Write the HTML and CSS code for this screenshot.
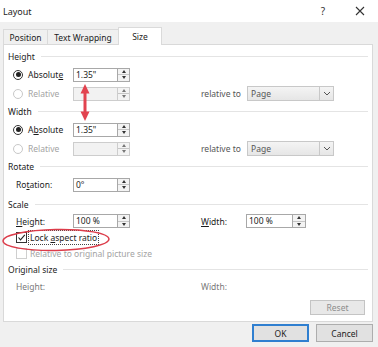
FILE: index.html
```html
<!DOCTYPE html>
<html lang="en">
<head>
    <meta charset="UTF-8">
    <title>Layout</title>
    <link rel="stylesheet" href="styles.css">
</head>
<body>
<div class="dialog">
    <!-- Title bar -->
    <div class="titlebar">
        <span class="title">Layout</span>
        <span class="help">?</span>
        <svg class="close" width="10" height="10" viewBox="0 0 10 10"><path d="M1 1 L9 9 M9 1 L1 9" stroke="#333" stroke-width="1.1"/></svg>
    </div>

    <!-- Tabs -->
    <div class="tabs">
        <div class="tab tab-pos">Position</div>
        <div class="tab tab-wrap">Text Wrapping</div>
        <div class="tab tab-size active">Size</div>
    </div>

    <div class="panel">
        <!-- Height -->
        <div class="heading">Height</div>
        <div class="row">
            <div class="opt"><span class="radio checked"></span>Absolut<u>e</u></div>
            <div class="spin"><div class="field">1.35"</div><div class="arrows"><span class="up"></span><span class="down"></span></div></div>
        </div>
        <div class="row disabled">
            <div class="opt"><span class="radio"></span>Relative</div>
            <div class="spin"><div class="field"></div><div class="arrows"><span class="up"></span><span class="down"></span></div></div>
            <div class="relto">relative to</div>
            <div class="select"><span class="sel-text">Page</span><span class="drop"><svg width="8" height="5" viewBox="0 0 8 5"><path d="M1 1 L4 4 L7 1" fill="none" stroke="#555" stroke-width="1"/></svg></span></div>
        </div>

        <!-- Width -->
        <div class="heading">Width</div>
        <div class="row">
            <div class="opt"><span class="radio checked"></span>A<u>b</u>solute</div>
            <div class="spin"><div class="field">1.35"</div><div class="arrows"><span class="up"></span><span class="down"></span></div></div>
        </div>
        <div class="row disabled">
            <div class="opt"><span class="radio"></span>Relative</div>
            <div class="spin"><div class="field"></div><div class="arrows"><span class="up"></span><span class="down"></span></div></div>
            <div class="relto">relative to</div>
            <div class="select"><span class="sel-text">Page</span><span class="drop"><svg width="8" height="5" viewBox="0 0 8 5"><path d="M1 1 L4 4 L7 1" fill="none" stroke="#555" stroke-width="1"/></svg></span></div>
        </div>

        <!-- Rotate -->
        <div class="heading">Rotate</div>
        <div class="row">
            <div class="name">Ro<u>t</u>ation:</div>
            <div class="spin"><div class="field">0°</div><div class="arrows"><span class="up"></span><span class="down"></span></div></div>
        </div>

        <!-- Scale -->
        <div class="heading scale">Scale</div>
        <div class="row small">
            <div class="name"><u>H</u>eight:</div>
            <div class="spin"><div class="field">100 %</div><div class="arrows"><span class="up"></span><span class="down"></span></div></div>
            <div class="wlabel"><u>W</u>idth:</div>
            <div class="spin wide"><div class="field">100 %</div><div class="arrows"><span class="up"></span><span class="down"></span></div></div>
        </div>
        <div class="row small">
            <span class="check checked"><svg width="9" height="9" viewBox="0 0 9 9"><path d="M1.5 4.5 L3.5 6.8 L7.8 1.8" fill="none" stroke="#222" stroke-width="1.1"/></svg></span>
            <span class="focus">Lock <u>a</u>spect ratio</span>
        </div>
        <div class="row small disabled">
            <span class="check"></span>
            <span class="plain">Relative to original picture size</span>
        </div>

        <!-- Original size -->
        <div class="heading">Original size</div>
        <div class="row small muted">
            <div class="name">Height:</div>
            <div class="wlabel orig">Width:</div>
        </div>
        <div class="reset-row">
            <button class="btn reset">Reset</button>
        </div>
    </div>

    <div class="footer">
        <button class="btn ok">OK</button>
        <button class="btn">Cancel</button>
    </div>

    <!-- red annotations drawn over the dialog -->
    <svg class="marks" width="378" height="347" viewBox="0 0 378 347">
        <path d="M85 84 L80.5 93.5 L89.5 93.5 Z" fill="#e2434f"/>
        <path d="M85 121 L80.5 111.5 L89.5 111.5 Z" fill="#e2434f"/>
        <line x1="85" y1="92" x2="85" y2="113" stroke="#e2434f" stroke-width="3"/>
        <ellipse cx="56" cy="240" rx="53" ry="10.5" fill="none" stroke="#dc3c4a" stroke-width="1.4" transform="rotate(-1 56 240)"/>
    </svg>
</div>
</body>
</html>
```

FILE: styles.css
```css
body {
    margin: 0;
    font-family: "Noto Sans", sans-serif;
    font-size: 8.5px;
    color: #1c1c1c;
    background-color: #f0f0f0;
}
.dialog {
    position: relative;
    width: 378px;
    height: 347px;
    overflow: hidden;
}
u {
    text-decoration-thickness: 1px;
    text-underline-offset: 1px;
}

/* title bar */
.titlebar {
    height: 22px;
    background: #fff;
    display: flex;
    align-items: center;
    padding-left: 3px;
    font-size: 9px;
}
.title {
    flex: 1;
}
.help {
    margin-right: 30px;
    font-size: 10px;
    color: #333;
}
.close {
    margin-right: 13px;
}

/* tabs */
.tabs {
    display: flex;
    align-items: flex-end;
    height: 17px;
    margin-top: 5px;
    padding-left: 3px;
}
.tab {
    box-sizing: border-box;
    height: 15px;
    display: flex;
    align-items: center;
    justify-content: center;
    border: 1px solid #dadada;
    border-bottom: none;
    background: #f0f0f0;
    margin-right: -1px;
}
.tab-pos { width: 45px; }
.tab-wrap { width: 72px; }
.tab-size { width: 44px; }
.tab.active {
    position: relative;
    height: 18px;
    margin-bottom: -1px;
    background: #fff;
    z-index: 1;
}

/* page panel */
.panel {
    box-sizing: border-box;
    height: 278px;
    margin: 0 5px 0 3px;
    padding-top: 3px;
    background: #fff;
    border: 1px solid #d9d9d9;
}
.heading {
    height: 17px;
    display: flex;
    align-items: center;
    padding-left: 4px;
    margin-right: 4px;
}
.heading::after {
    content: "";
    flex: 1;
    border-top: 1px solid #e4e4e4;
    margin-left: 6px;
}
.heading.scale {
    margin-top: 2px;
}
.row {
    height: 19px;
    display: flex;
    align-items: center;
}
.row.small {
    height: 16px;
}
.disabled {
    color: #a3a3a3;
}
.muted {
    color: #7a7a7a;
}

/* radios and checks */
.opt {
    display: flex;
    align-items: center;
    width: 60px;
    margin-left: 9px;
}
.radio {
    box-sizing: border-box;
    width: 10px;
    height: 10px;
    border: 1px solid #c8c8c8;
    border-radius: 50%;
    margin-right: 5px;
    display: flex;
    align-items: center;
    justify-content: center;
}
.radio.checked {
    border-color: #333;
}
.radio.checked::after {
    content: "";
    width: 5px;
    height: 5px;
    border-radius: 50%;
    background: #222;
}
.check {
    box-sizing: border-box;
    width: 11px;
    height: 11px;
    margin-left: 12px;
    border: 1px solid #cfcfcf;
    display: flex;
    align-items: center;
    justify-content: center;
}
.check.checked {
    border-color: #333;
}
.focus {
    margin-left: 1px;
    padding: 1px 1px;
    border: 1px dotted #444;
    line-height: 11px;
}
.plain {
    margin-left: 3px;
}
.name {
    width: 57px;
    margin-left: 12px;
}

/* spin boxes */
.spin {
    display: flex;
    width: 57px;
    height: 14px;
}
.spin.wide {
    width: 60px;
}
.field {
    box-sizing: border-box;
    flex: 1;
    border: 1px solid #a8a8a8;
    padding-left: 2px;
    line-height: 12px;
    background: #fff;
}
.arrows {
    box-sizing: border-box;
    width: 12px;
    border: 1px solid #a8a8a8;
    border-left: none;
    background: #f3f3f3;
    display: flex;
    flex-direction: column;
}
.spin.wide .arrows {
    width: 13px;
}
.up, .down {
    flex: 1;
    display: flex;
    align-items: center;
    justify-content: center;
}
.up {
    border-bottom: 1px solid #c6c6c6;
}
.up::after {
    content: "";
    border-left: 2.5px solid transparent;
    border-right: 2.5px solid transparent;
    border-bottom: 3px solid #333;
}
.down::after {
    content: "";
    border-left: 2.5px solid transparent;
    border-right: 2.5px solid transparent;
    border-top: 3px solid #333;
}
.disabled .field {
    background: #f2f2f2;
    border-color: #cdcdcd;
}
.disabled .arrows {
    border-color: #cdcdcd;
}
.disabled .up::after { border-bottom-color: #777; }
.disabled .down::after { border-top-color: #777; }

/* relative to */
.relto {
    width: 46px;
    margin-left: 71px;
    color: #555;
}
.select {
    box-sizing: border-box;
    width: 87px;
    height: 15px;
    display: flex;
    border: 1px solid #c8c8c8;
    background: linear-gradient(#f4f4f4, #e6e6e6);
    color: #555;
}
.sel-text {
    flex: 1;
    padding-left: 3px;
    line-height: 13px;
}
.drop {
    width: 13px;
    border-left: 1px solid #c8c8c8;
    display: flex;
    align-items: center;
    justify-content: center;
}
.wlabel {
    width: 45px;
    margin-left: 71px;
}
.wlabel.orig {
    margin-left: 128px;
}

/* buttons */
.btn {
    box-sizing: border-box;
    font-family: "Noto Sans", sans-serif;
    font-size: 8.5px;
    padding: 0;
    background: #e1e1e1;
    border: 1px solid #adadad;
    color: #1c1c1c;
}
.reset-row {
    display: flex;
    justify-content: flex-end;
    margin-top: 6px;
    margin-right: 7px;
}
.reset {
    width: 55px;
    height: 15px;
    color: #8d8d8d;
    border-color: #c4c4c4;
    background: #e8e8e8;
}
.footer {
    display: flex;
    justify-content: flex-end;
    gap: 7px;
    margin: 2px 5px 0 0;
}
.footer .btn {
    width: 57px;
    height: 18px;
}
.btn.ok {
    border: 2px solid #2f7fd0;
}

.marks {
    position: absolute;
    left: 0;
    top: 0;
    pointer-events: none;
}
```
